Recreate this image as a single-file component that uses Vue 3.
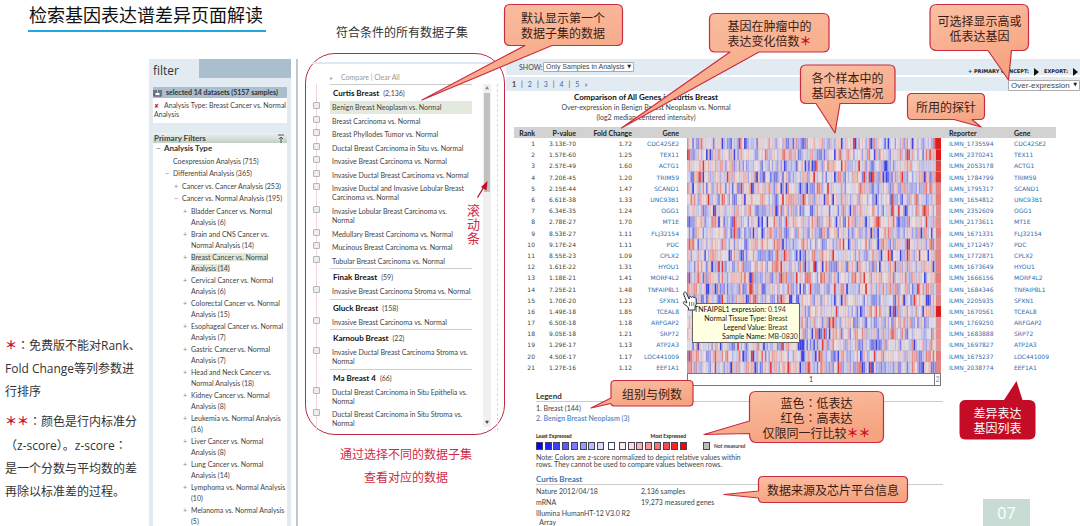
<script setup>
const tree = [
  'Bladder Cancer vs. Normal\nAnalysis (6)',
  'Brain and CNS Cancer vs.\nNormal Analysis (14)',
  'Breast Cancer vs. Normal\nAnalysis (14)',
  'Cervical Cancer vs. Normal\nAnalysis (6)',
  'Colorectal Cancer vs. Normal\nAnalysis (15)',
  'Esophageal Cancer vs. Normal\nAnalysis (7)',
  'Gastric Cancer vs. Normal\nAnalysis (7)',
  'Head and Neck Cancer vs.\nNormal Analysis (18)',
  'Kidney Cancer vs. Normal\nAnalysis (8)',
  'Leukemia vs. Normal Analysis\n(16)',
  'Liver Cancer vs. Normal\nAnalysis (8)',
  'Lung Cancer vs. Normal\nAnalysis (14)',
  'Lymphoma vs. Normal Analysis\n(10)',
  'Melanoma vs. Normal Analysis\n(5)'
]

const subsets = [
  { name: 'Curtis Breast', count: '2,136' },
  { id: 1, label: 'Benign Breast Neoplasm vs. Normal', active: true },
  { id: 2, label: 'Breast Carcinoma vs. Normal' },
  { id: 3, label: 'Breast Phyllodes Tumor vs. Normal' },
  { id: 4, label: 'Ductal Breast Carcinoma in Situ vs. Normal' },
  { id: 5, label: 'Invasive Breast Carcinoma vs. Normal' },
  { id: 6, label: 'Invasive Ductal Breast Carcinoma vs. Normal' },
  { id: 7, label: 'Invasive Ductal and Invasive Lobular Breast\nCarcinoma vs. Normal' },
  { id: 8, label: 'Invasive Lobular Breast Carcinoma vs.\nNormal' },
  { id: 9, label: 'Medullary Breast Carcinoma vs. Normal' },
  { id: 10, label: 'Mucinous Breast Carcinoma vs. Normal' },
  { id: 11, label: 'Tubular Breast Carcinoma vs. Normal' },
  { name: 'Finak Breast', count: '59' },
  { id: 12, label: 'Invasive Breast Carcinoma Stroma vs. Normal' },
  { name: 'Gluck Breast', count: '158' },
  { id: 13, label: 'Invasive Breast Carcinoma vs. Normal' },
  { name: 'Karnoub Breast', count: '22' },
  { id: 14, label: 'Invasive Ductal Breast Carcinoma Stroma vs.\nNormal' },
  { name: 'Ma Breast 4', count: '66' },
  { id: 15, label: 'Ductal Breast Carcinoma in Situ Epithelia vs.\nNormal' },
  { id: 16, label: 'Ductal Breast Carcinoma in Situ Stroma vs.\nNormal' }
]

const genes = [
  ['3.13E-70', '1.72', 'CDC42SE2', '1735594'],
  ['1.57E-60', '1.25', 'TEX11', '2370241'],
  ['2.57E-49', '1.60', 'ACTG1', '2053178'],
  ['7.20E-45', '1.20', 'TRIM59', '1784799'],
  ['2.15E-44', '1.47', 'SCAND1', '1795317'],
  ['6.61E-38', '1.33', 'UNC93B1', '1654812'],
  ['6.34E-35', '1.24', 'OGG1', '2352609'],
  ['2.78E-27', '1.70', 'MT1E', '2173611'],
  ['8.53E-27', '1.11', 'FLJ32154', '1671331'],
  ['9.17E-24', '1.11', 'PDC', '1712457'],
  ['8.55E-23', '1.09', 'CPLX2', '1772871'],
  ['1.61E-22', '1.31', 'HYOU1', '1673649'],
  ['1.18E-21', '1.41', 'MORF4L2', '1666156'],
  ['7.25E-21', '1.48', 'TNFAIP8L1', '1684346'],
  ['1.70E-20', '1.23', 'SFXN1', '2205935'],
  ['1.49E-18', '1.85', 'TCEAL8', '1670561'],
  ['6.50E-18', '1.18', 'ARFGAP2', '1769250'],
  ['9.05E-18', '1.21', 'SRP72', '1683888'],
  ['1.29E-17', '1.13', 'ATP2A3', '1697827'],
  ['4.50E-17', '1.17', 'LOC441009', '1675237'],
  ['1.27E-16', '1.12', 'EEF1A1', '2038774']
]

// Heat map: 144 samples plus 3 neoplasm samples per gene.
let seed = 20120418
function rand() {
  seed = (seed * 1664525 + 1013904223) % 4294967296
  return seed / 4294967296
}
function shade(z) {
  const k = Math.min(1, Math.abs(z))
  const low = Math.round(222 - 195 * k)
  const high = Math.round(232 - 8 * k)
  return z < 0 ? `rgb(${low},${low},${high})` : `rgb(${high},${low},${low})`
}
const tailZ = [1, 1, 0.8, 0.85, 0.45, 0.5, 0.4, 0.4, 0.5, 0.4, 0.45, 0.45, 0.5, 0.4, 0.45, 1, 0.4, 0.4, 0.35, 0.5, 0.45]
const cells = []
genes.forEach((g, row) => {
  let prev = 0
  for (let col = 0; col < 144; col++) {
    const noise = rand() + rand() + rand() - 1.55
    let z = noise * 0.5 + prev * 0.3
    if (rand() < 0.06) z = rand() < 0.6 ? -0.8 : 0.85
    prev = Math.max(-0.5, Math.min(0.5, z))
    cells.push({ x: col * 1.73, y: row, w: 1.8, c: shade(z) })
  }
  cells.push({ x: 249, y: row, w: 5, c: shade(tailZ[row]) })
})

const blues = [1, 0.88, 0.76, 0.64, 0.52, 0.4, 0.27, 0.14].map(k => mix(k, true))
const reds = [0.07, 0.14, 0.3, 0.42, 0.56, 0.72, 0.86, 1].map(k => mix(k, false))
function mix(k, blue) {
  const v = Math.round(255 * (1 - k))
  return blue ? `rgb(${v},${v},255)` : `rgb(255,${v},${v})`
}

const callouts = [
  { k: 'c1', t: ['默认显示第一个', '数据子集的数据'] },
  { k: 'c2', t: ['基因在肿瘤中的', '表达变化倍数'], star: '＊' },
  { k: 'c3', t: ['可选择显示高或', '低表达基因'] },
  { k: 'c4', t: ['各个样本中的', '基因表达情况'] },
  { k: 'c5', t: ['所用的探针'] },
  { k: 'c6', t: ['组别与例数'] },
  { k: 'c7', t: ['蓝色：低表达', '红色：高表达', '仅限同一行比较'], star: '＊＊' },
  { k: 'c8', t: ['数据来源及芯片平台信息'] },
  { k: 'c9', t: ['差异表达', '基因列表'] }
]
</script>

<template>
  <div class="page">
    <header class="top">
      <h1>检索基因表达谱差异页面解读</h1>
      <p class="subset-title">符合条件的所有数据子集</p>
    </header>

    <aside class="notes">
      <p><b>＊</b><span class="colon">：</span>免费版不能对Rank、<br>Fold Change等列参数进<br>行排序</p>
      <p><b>＊＊</b><span class="colon">：</span>颜色是行内标准分<br>（z-score）。z-score<span class="colon">：</span><br>是一个分数与平均数的差<br>再除以标准差的过程。</p>
    </aside>

    <section class="filter">
      <div class="filter-head"><h2>filter</h2><span></span></div>
      <div class="filter-body">
        <div class="selected">
          <svg width="9" height="8" viewBox="0 0 9 8"><path d="M1 1v6h7V1M3 1v3M6 1v3" fill="none" stroke="#445" stroke-width="1.2" /><path d="M3 4h3v2H3z" fill="#fff" /></svg>
          selected 14 datasets (5157 samples)
        </div>
        <p class="chosen"><span>✘</span>Analysis Type: Breast Cancer vs. Normal<br>Analysis</p>
        <h3 class="primary">Primary Filters
          <svg width="8" height="9" viewBox="0 0 8 9"><path d="M1 1h6M4 9V3M2 5l2-2 2 2" fill="none" stroke="#555" /></svg>
        </h3>
        <div class="tree">
          <h4><i>−</i>Analysis Type</h4>
          <p class="l1">Coexpression Analysis (715)</p>
          <p class="l1"><i>−</i>Differential Analysis (365)</p>
          <p class="l2"><i>+</i>Cancer vs. Cancer Analysis (253)</p>
          <p class="l2"><i>−</i>Cancer vs. Normal Analysis (195)</p>
          <ul>
            <li v-for="(t, i) in tree" :key="t"><i>+</i><span :class="{ hit: i === 2 }">{{ t }}</span></li>
          </ul>
        </div>
      </div>
    </section>

    <section class="subset">
      <div class="frame">
        <div class="band"></div>
        <div class="tools"><span>►</span><a href="#">Compare</a> | <a href="#">Clear All</a></div>
        <div class="scroller">
          <div class="list">
            <template v-for="s in subsets" :key="s.name || s.id">
              <h3 v-if="s.name">{{ s.name }} <small>({{ s.count }})</small></h3>
              <div v-else class="item" :class="{ active: s.active }">
                <input :id="'s' + s.id" type="checkbox">
                <label :for="'s' + s.id">{{ s.label }}</label>
              </div>
            </template>
          </div>
          <div class="bar"><i>▲</i><span></span><i class="down">▼</i></div>
        </div>
      </div>
      <p class="hint">通过选择不同的数据子集<br>查看对应的数据</p>
    </section>

    <main>
      <div class="row show">
        <label for="show">SHOW:</label>
        <span class="pick"><select id="show"><option>Only Samples in Analysis</option></select></span>
        <div class="actions"><span>+ PRIMARY CONCEPT:</span><b></b><span>EXPORT:</span><b></b></div>
      </div>
      <div class="row pages">
        <strong>1</strong><span>|</span><a href="#">2</a><span>|</span><a href="#">3</a><span>|</span><a href="#">4</a><span>|</span><a href="#">5</a><a href="#">»</a>
        <span class="pick wide"><select aria-label="Expression"><option>Over-expression</option></select></span>
      </div>
      <div class="caption">
        <h2>Comparison of All Genes in Curtis Breast</h2>
        <p>Over-expression in Benign Breast Neoplasm vs. Normal</p>
        <p>(log2 median-centered intensity)</p>
      </div>
      <table>
        <colgroup><col class="w1"><col class="w2"><col class="w3"><col class="w4"><col class="w5"><col class="w6"><col></colgroup>
        <thead>
          <tr><th>Rank</th><th>P-value</th><th>Fold Change</th><th>Gene</th><th></th><th class="left">Reporter</th><th class="left">Gene</th></tr>
        </thead>
        <tbody>
          <tr v-for="(g, i) in genes" :key="g[2]">
            <td>{{ i + 1 }}</td><td>{{ g[0] }}</td><td>{{ g[1] }}</td><td><a href="#">{{ g[2] }}</a></td>
            <td v-if="i === 0" rowspan="21" class="map">
              <svg viewBox="0 0 254 21" preserveAspectRatio="none">
                <rect v-for="(c, n) in cells" :key="n" :x="c.x" :y="c.y" :width="c.w" height="1" :fill="c.c" />
                <path v-for="n in 20" :key="'l' + n" :d="`M0 ${n}H254`" stroke="#99a" stroke-width="0.06" />
              </svg>
            </td>
            <td class="left"><a href="#">ILMN_{{ g[3] }}</a></td><td class="left"><a href="#">{{ g[2] }}</a></td>
          </tr>
        </tbody>
      </table>
      <div class="groups"><span>1</span><span>2</span></div>

      <div class="info">
        <h3>Legend</h3>
        <p>1. Breast (144)</p>
        <p class="blue">2. Benign Breast Neoplasm (3)</p>
        <div class="scale-labels"><span>Least Expressed</span><span>Most Expressed</span></div>
        <div class="scale">
          <div><i v-for="c in blues" :key="c" :style="{ background: c }"></i></div>
          <i></i>
          <div><i v-for="c in reds" :key="c" :style="{ background: c }"></i></div>
          <i class="none"></i><span>Not measured</span>
        </div>
        <p class="note">Note: Colors are z-score normalized to depict relative values within<br>rows. They cannot be used to compare values between rows.</p>
        <h3 class="study">Curtis Breast</h3>
        <div class="facts">
          <span>Nature 2012/04/18</span><span>2,136 samples</span>
          <span>mRNA</span><span>19,273 measured genes</span>
          <span class="chip">Illumina HumanHT-12 V3.0 R2<br>&nbsp;&nbsp;Array</span>
        </div>
      </div>
    </main>

    <dl class="tip">
      <dt>TNFAIP8L1 expression:</dt><dd>0.194</dd>
      <dt>Normal Tissue Type:</dt><dd>Breast</dd>
      <dt>Legend Value:</dt><dd>Breast</dd>
      <dt>Sample Name:</dt><dd>MB-0830</dd>
    </dl>
    <svg class="hand" width="16" height="20" viewBox="0 0 16 20">
      <path d="M2 1.5c1-1 2-.3 2.400.6L7 8l.3-2c1-.9 2-.3 2.200.5l.3-.6c1-.5 2 0 2.100 1l.3-.3c1-.3 1.800.3 1.900 1.300l.2 5.100-1.300 3V19H6.500v-2.500L1.600 12.500c-1-1.300.5-2.500 1.700-1.500L5 12 1.600 3z" fill="#fff" stroke="#333" stroke-width="1" />
      <path d="M7.500 11v4M9.700 11v4M11.900 11v4" stroke="#555" stroke-width=".8" />
    </svg>

    <svg class="shapes" width="1080" height="526" viewBox="0 0 1080 526">
      <defs>
        <linearGradient id="peach" x1="0" y1="0" x2="0.4" y2="1"><stop offset="0" stop-color="#fac0a4" /><stop offset="1" stop-color="#f6a380" /></linearGradient>
      </defs>
      <g fill="url(#peach)" stroke="#cb2c42" stroke-width="1.2" stroke-linejoin="round">
        <path d="M510 4.500H617q5.500 0 5.500 5.500V40q0 5.500-5.500 5.500H552L422 100 525 45.500H510q-5.500 0-5.500-5.500V10q0-5.500 5.500-5.500z" />
        <path d="M715 13.500H823q6 0 6 6V46.500q0 5.500-6 5.500H759L621.500 128 730 52H715q-5.500 0-5.500-5.500V19.500q0-6 5.500-6z" />
        <path d="M937 4.500H1022q6.500 0 6.500 6.500V44q0 6.500-6.500 6.500H1011.500L1008.500 80 988 50.500H937q-7 0-7-6.500V11q0-6.500 7-6.500z" />
        <path d="M806 65H889.500q5.500 0 5.500 5.500V98q0 5.500-5.500 5.500H840L835 133 816 103.500H806q-5.500 0-5.500-5.500V70.500q0-5.500 5.500-5.500z" />
        <path d="M912 93.500H980q4.500 0 4.500 4.500V115q0 4.500-4.500 4.500H972L981 127 954 119.500H912q-4.500 0-4.500-4.500V98q0-4.500 4.500-4.500z" />
        <path d="M615 380.500H689q4 0 4 4V402q0 4-4 4H615q-4 0-4-2.500L591 408 611 398V384.500q0-4 4-4z" />
        <path d="M756 391.500H877q6.500 0 6.500 6.500V436q0 6.500-6.500 6.500H756q-6.500 0-6.500-9L704 434.500 749.500 421V398q0-6.500 6.500-6.500z" />
        <path d="M763 476.500H903q4.500 0 4.500 4.500V498q0 4.500-4.500 4.500H763q-4.500 0-4.500-4.500L724 494.500 758.500 491V481q0-4.500 4.500-4.500z" />
      </g>
      <path d="M965 400H1004L1016.500 381 1022.500 400H1029q6.500 0 6.500 6.500V433q0 6.500-6.500 6.500H965q-5.500 0-5.500-6.500V406.500q0-6.500 5.500-6.500z" fill="#c40c26" />
      <path d="M477.500 197.500L484.500 186" stroke="#c40c26" stroke-width="1.3" /><path d="M487.500 181L486.500 190.500 481 187z" fill="#c40c26" />
    </svg>
    <div v-for="c in callouts" :key="c.k" class="say" :class="c.k">
      <p v-for="(line, i) in c.t" :key="line">{{ line }}<b v-if="c.star && i === c.t.length - 1">{{ c.star }}</b></p>
    </div>
    <p class="bar-note">滚动条</p>
    <span class="page-no">07</span>
  </div>
</template>

<style>
body { margin: 0; }
</style>

<style scoped>
.page { position: relative; height: 100vh; overflow: hidden; background: #fff; display: grid; grid-template-columns: 149px 142px 215px 1fr; grid-template-rows: 59px 1fr; font: 7px/9px Lato, "Noto Sans CJK SC", sans-serif; color: #444; }
.page * { box-sizing: border-box; }
h1, h2, h3, h4, p, ul, dl, dd { margin: 0; padding: 0; }
i { font-style: normal; }
a { color: #2f6fb0; text-decoration: none; }
.top { grid-column: 1 / -1; display: flex; align-items: flex-start; font-family: "Noto Sans CJK SC", sans-serif; }
h1 { margin-left: 28px; padding: 0 3px 0 1px; height: 32px; border-bottom: 2px solid #1fa9df; font-size: 18px; line-height: 28px; font-weight: 400; color: #111; }
.subset-title { margin: 22px 0 0 70px; font-size: 12px; line-height: 20px; color: #333; }
.notes { padding: 274px 0 0 5px; font: 12px/23px "Open Sans", "Noto Sans CJK SC", sans-serif; color: #333; white-space: nowrap; }
.notes p { margin-bottom: 6px; }
.notes b { color: #c8102e; }
.notes .colon { font-family: "Noto Sans CJK TC", sans-serif; }

.filter { min-height: 0; display: flex; flex-direction: column; background: #e2ebf1; }
.filter-head { display: flex; }
.filter-head h2 { width: 50px; padding: 4px 0 0 4px; font: 12px/16px "Open Sans", sans-serif; color: #333; }
.filter-head span { flex: 1; height: 19px; background: #aabfcd; }
.filter-body { flex: 1; min-height: 0; display: flex; flex-direction: column; margin: 8px 4px 0; white-space: nowrap; }
.selected { display: flex; align-items: center; gap: 4px; height: 11px; background: #aabfcd; font-weight: 700; color: #333; }
.chosen { height: 25px; padding: 3px 0 0 1px; background: #fff; line-height: 8px; }
.chosen span { display: inline-block; width: 10px; color: #c8102e; font-size: 6px; }
.primary { display: flex; justify-content: space-between; align-items: center; margin-top: 10px; padding: 0 2px 0 1px; height: 10px; font-size: 8px; background: linear-gradient(#eef2ee, #bfd0c6); }
.tree { flex: 1; min-height: 0; background: #fff; }
.tree h4 { padding: 1px 0 3px 11px; font-size: 8px; line-height: 8px; color: #333; }
.tree p { line-height: 12px; }
.tree .l1 { padding-left: 20px; }
.tree .l1 + .l2 { margin-top: 1px; }
.tree .l2 { padding-left: 29px; }
.tree i { display: inline-block; width: 8px; margin-left: -8px; color: #888; }
.tree ul { list-style: none; padding-top: 2px; }
.tree li { height: 22px; margin-bottom: 1px; padding-left: 38px; line-height: 11px; white-space: pre-line; }
.hit { background: #e0e8d8; }

.subset { display: flex; flex-direction: column; margin-left: 5px; border-left: 2px solid #c4c8cc; }
.frame { position: relative; margin: -6px 1px 0 7px; height: 382px; border: 1px solid #c22a44; border-radius: 30px; padding: 8px 6px 0; }
.band { height: 2px; background: #dce9f2; }
.tools { height: 20px; padding: 9px 0 0 17px; color: #999; }
.tools a { color: #999; }
.tools span { display: inline-block; width: 12px; font-size: 5px; color: #aaa; }
.scroller { display: flex; gap: 3px; border-right: 1px dashed #cde0d6; padding-right: 6px; }
.list { flex: 1; height: 347px; display: flex; flex-direction: column; padding-left: 4px; background: linear-gradient(#f2d4da, #f2d4da) 4px 0 / 1px 100% no-repeat; }
.list h3 { height: 17px; margin: 0 8px 0 14px; padding-left: 3px; border-top: 1px solid #ccc; font-size: 8px; line-height: 17px; color: #111; }
.list small { font-size: 7px; font-weight: 400; color: #444; margin-left: 2px; }
.item { flex: 1 0 auto; display: flex; align-items: flex-start; margin-left: -3px; }
.item input { appearance: none; width: 7px; height: 7px; margin: 1px 10px 0 0; border: 1px solid #b5b5b5; border-radius: 1px; background: #eee; }
.item label { padding: 2px 0 2px 2px; white-space: pre; flex: 1; margin-right: 8px; }
.item.active label { background: #e3eadd; }
.bar { width: 8px; height: 343px; display: flex; flex-direction: column; background: #f0f0f0; font-size: 4px; text-align: center; color: #888; }
.bar span { height: 99px; margin: 0 1px; background: #c1c1c1; }
.bar .down { margin-top: auto; color: #444; }
.hint { padding: 7px 0 0 8px; font: 12px/23px "Noto Sans CJK SC", sans-serif; color: #cf2b43; text-align: center; }

main { min-width: 0; }
.row { display: flex; align-items: center; background: #e2ebf1; }
.show { height: 16px; padding: 0 2px 0 13px; }
.show label { width: 24px; }
.pick { position: relative; display: inline-flex; }
.pick::after { content: "▼"; position: absolute; right: 3px; top: 0; font: 5px/9px "DejaVu Sans", sans-serif; color: #222; pointer-events: none; }
select { appearance: none; width: 91px; height: 10px; border: 1px solid #aaa; border-radius: 1px; background: #fff; padding: 0 2px; font: 7px/8px "Liberation Sans", sans-serif; color: #444; }
.wide { margin-left: auto; margin-top: 3px; }
.wide select { width: 72px; height: 11px; font-size: 8px; }
.actions { margin-left: auto; padding-top: 9px; display: flex; align-items: center; gap: 5px; font: 700 5px/7px "DejaVu Sans", sans-serif; color: #222; }
.actions b { border-left: 5px solid #111; border-top: 4px solid transparent; border-bottom: 4px solid transparent; }
.pages { margin-top: 2px; height: 14px; padding-left: 6px; gap: 5px; }
.caption { padding: 1px 0 0; width: 280px; text-align: center; line-height: 10px; }
.caption h2 { font-size: 8px; line-height: 10px; color: #111; }
table { width: calc(100% - 32px); margin: 5px 0 0 8px; border-collapse: collapse; table-layout: fixed; font: 6px/7px "DejaVu Sans", sans-serif; }
.w1 { width: 21px; } .w2 { width: 41px; } .w3 { width: 56px; } .w4 { width: 51px; } .w5 { width: 262px; } .w6 { width: 65px; }
th { height: 11px; background: #d2d2d2; font: 700 7px/8px Lato, sans-serif; color: #222; }
th, td { padding: 0; text-align: right; white-space: nowrap; }
th:nth-child(4), td:nth-child(4) { padding-right: 4px; }
.left, th.left { text-align: left; padding-left: 4px; }
td.map { height: 235px; padding: 0 4px; vertical-align: top; }
.map svg { display: block; width: 100%; height: 235px; }
.groups { display: flex; margin: 0 139px 0 181px; height: 13px; border: 1px solid #777; text-align: center; line-height: 11px; }
.groups span:first-child { flex: 1; }
.groups span:last-child { width: 6px; border-left: 1px solid #777; color: #59c; }

.info { margin: 5px 137px 0 30px; white-space: nowrap; }
.info h3 { height: 11px; border-bottom: 1px solid #ccc; font-size: 8px; line-height: 10px; color: #333; }
.info p { line-height: 10px; }
.info h3 + p { margin-top: 1px; }
.info .blue { color: #5f93c8; font-weight: 700; }
.scale-labels { display: flex; justify-content: space-between; width: 150px; margin-top: 9px; font-size: 5px; line-height: 8px; font-weight: 700; color: #222; }
.scale { display: flex; align-items: center; gap: 4px; margin-top: 2px; height: 8px; font-size: 5px; font-weight: 700; }
.scale div { display: flex; justify-content: space-between; width: 68px; }
.scale i { width: 7px; height: 8px; border: 1px solid #445; }
.scale .none { margin-left: 12px; background: #bbb; }
.info .note { margin-top: 4px; line-height: 7px; }
.info .study { margin-top: 6px; color: #3f74ad; }
.facts { display: grid; grid-template-columns: 105px 1fr; row-gap: 2px; margin-top: 2px; }

.tip { position: absolute; left: 692px; top: 303px; display: grid; grid-template-columns: auto auto; column-gap: 2px; padding: 1px; border: 1px solid #666; background: #ffffe1; color: #333; white-space: nowrap; }
.tip dt { color: #111; display: flex; justify-content: flex-end; }
.hand { position: absolute; left: 682px; top: 291px; }
.shapes { position: absolute; left: 0; top: 0; pointer-events: none; }
.say { position: absolute; font: 12px/15px "Noto Sans CJK SC", sans-serif; color: #3a1c14; text-align: center; white-space: nowrap; }
.say b { color: #c8102e; }
.c1 { left: 504px; top: 10px; width: 118px; }
.c2 { left: 710px; top: 18px; width: 119px; }
.c3 { left: 930px; top: 13px; width: 99px; }
.c4 { left: 800px; top: 70px; width: 95px; }
.c5 { left: 907px; top: 99px; width: 78px; }
.c6 { left: 611px; top: 386px; width: 82px; }
.c7 { left: 749px; top: 395px; width: 135px; font-family: "Noto Sans CJK TC", sans-serif; }
.c8 { left: 758px; top: 482px; width: 150px; }
.c9 { left: 960px; top: 405px; width: 75px; color: #fff; }
.bar-note { position: absolute; left: 467px; top: 203px; width: 13px; font: 13px/14px "Noto Sans CJK SC", sans-serif; color: #cf2b43; }
.page-no { position: absolute; right: 50px; bottom: 0; width: 47px; height: 27px; background: #c9dcd3; color: #fff; font: 16px/28px "Open Sans", sans-serif; text-align: center; }
</style>
